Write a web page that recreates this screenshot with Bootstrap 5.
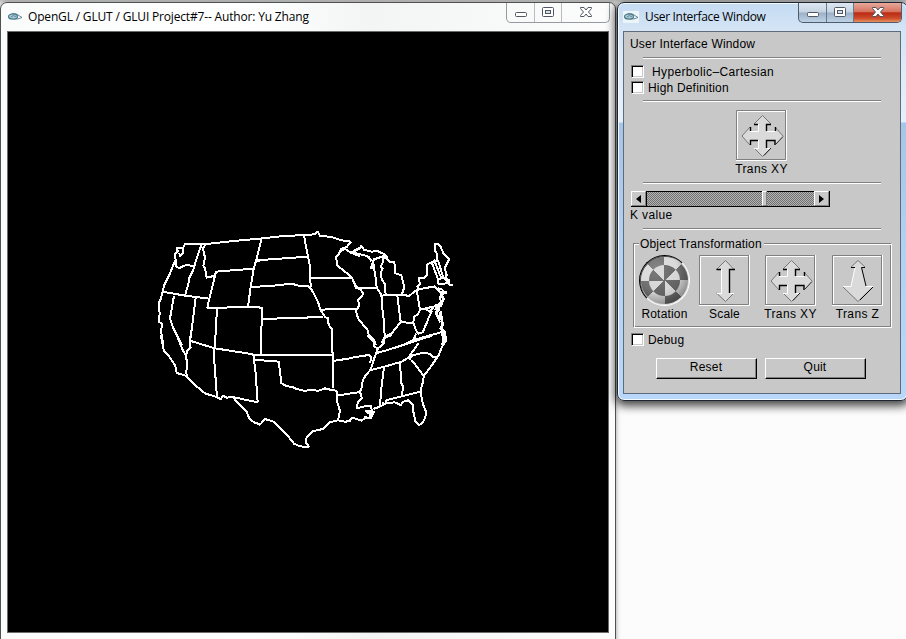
<!DOCTYPE html>
<html lang="en">
<head>
<meta charset="utf-8">
<title>User Interface Window</title>
<link rel="stylesheet" href="https://cdn.jsdelivr.net/npm/bootstrap@5.3.0/dist/css/bootstrap.min.css">
<style>
body{width:906px;height:639px;overflow:hidden;background:#fcfcfc;font-family:"Liberation Sans",Arial,sans-serif;font-size:12px;line-height:16px;color:#000}
.desk{width:906px;height:639px;background:linear-gradient(#bdbdbd 0,#e8e8e8 3px,#fcfcfc 8px)}
.win{top:2px}
.win-gl{left:0;width:616px;height:650px;border:1px solid #505050;border-radius:7px 7px 0 0;background:linear-gradient(90deg,#fafbfb,#fff 40%,#f3f5f5 60%,#fcfcfc);box-shadow:0 0 5px #0006;padding:0 6px}
.win-ui{left:617px;width:291px;height:399px;border:1px solid #1e2731;border-radius:7px;background:linear-gradient(#c4dbf2 0,#d5e5f6 28px,#e4eefa 95px,#e6f0fb 119px,#a5c6e9 120px,#b1d0f2 240px,#b9d7fa);box-shadow:0 3px 10px 2px #000b,inset 0 0 0 1px #f2f9ff;padding:0 5px}
.bar{height:28px}
.cap{font:12px/28px "Open Sans","Noto Sans",sans-serif;color:#000;white-space:nowrap}
.win-gl .cap{letter-spacing:-.17px;padding-left:5px}
.win-ui .cap{letter-spacing:-.33px;padding-left:2px}
.ctl{height:20px;border:1px solid #969b9f;border-top:0;border-radius:0 0 5px 5px;overflow:hidden}
.win-gl .ctl{margin-right:-1px}
.ctl>span{display:flex;align-items:center;justify-content:center;border-right:1px solid #b9bdc0;padding-bottom:1px}
.ctl>span:last-child{border:0}
.ctl .a{width:28px}.ctl .b{width:27px}.ctl .c{width:47px}
.win-ui .ctl{border-color:#4e5c6c;background:linear-gradient(#dde7f1,#c5d3e2 48%,#9cb0c7 52%,#bed2e6)}
.win-ui .ctl>span{border-color:#65778b}
.win-ui .ctl .c{background:linear-gradient(#e9a99b,#d67461 45%,#bc2a13 52%,#cb4c2b 80%,#e8935f)}
.canvas{display:block;background:#000;width:602px;height:602px;border:1px solid #6b6b6b}
.client{width:278px;height:363px;background:#c8c8c8;border:1px solid #5e6b7a;padding:4px 8px 0 6px}
.lbl{height:16px;white-space:nowrap;letter-spacing:.18px}
.wide{letter-spacing:.37px}
.sep{height:2px;width:238px;margin-left:13px;border-top:1px solid #808080;border-bottom:1px solid #fff}
.chk{width:13px;height:13px;border:1px solid #808080;border-right-color:#fff;border-bottom-color:#fff;background:#fff;box-shadow:inset 1px 1px #000,inset -1px -1px #c8c8c8;margin-left:1px;margin-top:1px}
.cell{width:51px}
.cell svg{display:block;flex:none}
.slider{width:199px;height:16px;margin-left:1px;border-bottom:1px solid #000;border-right:1px solid #000}
.track{height:15px;border-top:1px solid #000;background:repeating-conic-gradient(#707070 0 25%,#b4b4b4 0 50%) 0 0/2px 2px}
.track:nth-child(2){border-left:1px solid #000}
.knob{height:15px;background:#c8c8c8;border:1px solid #fff;border-right-color:#808080;border-bottom-color:#808080;display:flex;align-items:center;justify-content:center}
.group{width:259px;height:85px;margin-left:3px;border:1px solid;border-color:#808080 #fff #fff #808080;box-shadow:inset 1px 1px #fff,inset -1px -1px #808080;padding:0 0 0 5px}
.group .lgd{margin-top:-8px;background:#c8c8c8;width:125px;padding-left:1px}
.push{width:101px;height:21px;line-height:17px;text-align:center;background:#c8c8c8;border:1px solid #fff;border-right-color:#000;border-bottom-color:#000;box-shadow:inset -1px -1px #808080;padding:0 1px 2px 0;letter-spacing:.2px}
.ball{width:51px;height:51px;border-radius:50%;border:1px solid;border-color:#000 #fff #fff #000;padding:1px;box-shadow:inset 1px 1px #0009,inset -1px -1px #ddd}
.ball>div{width:47px;height:47px;border-radius:50%;padding:8px;background:radial-gradient(circle at 35% 30%,#fff3 0,#0000 45%,#0009 100%),repeating-conic-gradient(#d9d9d9 0 45deg,#6e6e6e 0 90deg)}
.ball>div>div{width:31px;height:31px;border-radius:50%;background:radial-gradient(circle at 25% 20%,#fff2,#0000 60%,#0002),repeating-conic-gradient(#666 0 45deg,#d6d6d6 0 90deg)}
</style>
<script src="https://cdn.jsdelivr.net/npm/bootstrap@5.3.0/dist/js/bootstrap.bundle.min.js"></script>
</head>
<body>
<svg width="0" height="0" class="position-absolute">
<defs>
<g id="fish"><ellipse cx="6" cy="5.500" rx="4.500" ry="2.600" fill="#a9c8d3" stroke="#477b8d" stroke-width="1.200"/><path d="M4 6Q6 3.500 9 5.500M5 2.500C9 2 11 4 15 6.500Q11 8.500 7 8" fill="none" stroke="#5a7f8c" stroke-width=".9"/></g>
<g id="mini"><rect x=".5" y=".5" width="11" height="4" rx="1" fill="#fff" stroke="#515663"/></g>
<g id="maxi"><rect x=".5" y=".5" width="11" height="9" rx="1" fill="#fff" stroke="#515663"/><rect x="3.500" y="3.500" width="5" height="3" fill="#d5dfe9" stroke="#515663"/></g>
<path id="close" d="M.5 .5H4L6 3 8 .5H11.500V1.500L8.500 5 11.500 8.500V9.500H8L6 7 4 9.500H.5V8.500L3.500 5 .5 1.500Z" fill="#fff" stroke="#515663"/>
<g id="frame"><path d="M.5 50V.5H50" fill="none" stroke="#808080"/><path d="M1.500 49V1.500H49" fill="none" stroke="#fff"/><path d="M50.500 0V50.500H0" fill="none" stroke="#fff"/><path d="M49.500 1V49.500H1" fill="none" stroke="#808080"/></g>
<g id="xy" fill="none">
<path d="M26.500 5.500L35 14H30.500V22H39V17L47 26 39 35V30H30.500V38H35L26.500 46.500 18 38H22.500V30H14V35L6 26 14 17V22H22.500V14H18Z" fill="#dadada"/>
<path d="M26.500 5.500L18 14M14 17L6 26M26.500 5.500L35 14M6 26L14 35M18 38L26.500 46.500 35 38M39 17L47 26" stroke="#777"/>
<path d="M22.500 14V21.500H14M22.500 30V38.500H18M39 21.500H31M31 38.500H35" stroke="#fff"/>
<path d="M30.500 21V14.500H35M30.500 38V30.500H39V35M14.500 35V30.500H22M14.500 17V21M18 14.500H22M39.500 17V21" stroke="#000" stroke-width="1.400"/>
<path d="M47 26.500L39.500 34.500M35 38L28 45.500" stroke="#222"/>
</g></defs>
</svg>
<main class="desk position-relative overflow-hidden">
<section class="win win-gl position-absolute">
  <header class="bar d-flex align-items-start">
    <svg class="mt-2" width="16" height="12"><use href="#fish"/></svg>
    <span class="cap flex-grow-1">OpenGL / GLUT / GLUI Project#7-- Author: Yu Zhang</span>
    <div class="ctl d-flex"><span class="a"><svg width="12" height="5" class="mt-1"><use href="#mini"/></svg></span><span class="b"><svg width="12" height="10"><use href="#maxi"/></svg></span><span class="c"><svg width="12" height="10"><use href="#close"/></svg></span></div>
  </header>
  <svg class="canvas" viewBox="8 32 600 600" fill="none" stroke="#fff" stroke-width="6" stroke-linejoin="round" shape-rendering="crispEdges">
    <g transform="translate(150 225) scale(.33333)">
      <path d="M330 41L250 48 180 56H106L98 70H88L80 68 83 78 75 86 79 125 88 129 106 121 134 122M96 66L100 82 90 94 88 84M76 105L58 150 42 182 38 200 32 222 26 236 29 265 27 290 35 296 34 325 40 360M155 58L140 100 130 135 118 158V166L105 212M166 59L159 70 165 98 160 122 165 130 170 158 195 152M195 152L198 140 310 131M38 200L105 212 178 221M195 152L178 221 172 248 294 247 330 246M72 212L60 280 70 310 96 360M137 218L119 360M201 249L195 360M318 108L311 131 302 185 294 247M318 108H330M302 185H330"/>
    </g>
    <g transform="translate(150 335) scale(.33333)">
      <path d="M32 0L42 48 55 60 76 92 80 114 102 120 112 126M80 0L98 45 108 62 112 48 122 38 119 18 122 0M108 62L112 92 108 112 112 126 140 154 165 175 202 187 212 192 220 182 230 188 248 186 323 202M122 18L195 40 310 58M194 0L193 80 201 187M310 58L316 105 323 202M250 188L262 203 290 230 298 250 312 262 330 269"/>
    </g>
    <g transform="translate(250 225) scale(.33333)">
      <path d="M30 41L80 35 160 30 194 28 203 20 210 32 245 36 275 46 304 50M35 40L18 108M162 32L174 95 180 125 182 186M20 106L90 101 174 95M2 186L60 183 125 176 145 182 175 182 186 196 204 230 210 252 225 276 234 280 236 300 245 312V360M182 158H310M304 50L290 66 274 72 266 88 258 96 262 122 290 144 306 158 318 185 330 192M266 80L286 72 300 82 330 94M210 254L315 251M28 249H36L33 360M36 282L220 276"/>
      <path d="M304 82L330 68"/>
    </g>
    <g transform="translate(250 335) scale(.33333)">
      <path d="M8 59L246 60M33 0V58M246 0L249 100V160M10 74L86 80 90 110 94 144 110 154 125 155 140 162 164 168 185 164 204 168 225 160 240 164 249 164 262 170V202L270 228 264 256 240 262 232 270 218 282 202 286 190 288 175 302 170 306 168 324 178 336M178 336L150 334 132 326 116 306 90 280 70 260 45 252 30 269 10 260M249 78L300 70M262 181L300 176M264 256L285 260 303 258"/>
    </g>
    <g transform="translate(350 225) scale(.33333)">
      <path d="M4 82L30 70 34 62 42 74 64 80 82 78 104 88 112 98 90 97 72 103 68 114 62 130 72 125 68 108M4 82L40 90 56 96 64 108M100 90V110L92 124 98 130 92 145 96 165 104 176 107 208M108 98L118 110 132 112 136 124V145L146 148 154 150 162 182 160 198 154 210M94 213L107 209H155L178 213 190 202 204 194 202 184 210 176 206 160 220 160 232 150 230 138 232 118 245 112 262 106 262 88 256 78V56H264L272 66 280 84 298 102 290 118 284 128 290 150 286 162 296 164V176L306 182M68 110L76 150 80 188 94 210 97 250 102 290 104 335M142 212L152 290M202 190L212 192 254 184 264 194 274 206 270 220 274 234M200 196L210 254 268 241M18 188H80M6 158L18 188 32 194 40 206 34 216 24 224 28 240 18 258 24 280 40 300 52 312 56 328 70 342 78 360M0 252H18M104 335L94 355M104 335L126 324 140 306 152 290 182 295 190 292 192 275 204 268 210 254M190 294L198 316 206 326 218 322 230 294 236 278 246 258M198 326L190 345 168 356M190 345L280 320M245 112L264 162 266 180M252 104L274 160M264 106L280 158M266 162L288 158M268 178L296 174M264 190L278 194"/>
      <path d="M276 198L286 202 274 208 280 222 272 242 268 236 266 256 258 262 264 276 270 278 272 262 278 300 272 310 284 322 288 350M254 250L264 256 260 240 274 240" stroke-width="8"/>
      <path d="M288 164L302 182M226 252L240 260 250 248M262 272L270 292M106 90V102"/>
      <path d="M274 202H292M296 180H308M276 318L282 352" stroke-width="8"/>
    </g>
    <g transform="translate(350 335) scale(.33333)">
      <path d="M0 69L56 60 64 68 60 84M52 0L70 20 74 36 84 40 100 28 104 8 126 0M84 40L78 55 70 78 62 104 48 120 38 136 36 155 30 170 36 190 24 200 20 220 44 214 62 212 66 228 48 228 60 238 72 232 62 250 42 246M0 256L8 248 34 257 52 246M0 174L30 172M80 54L110 46 246 2M62 105L100 96 155 80 175 68 184 74M196 0L190 18M206 24L192 44 175 68M180 70L190 60 218 54 238 56 250 66 260 66M184 74L204 100 222 124M282 2L286 18 276 36 266 60 246 90 222 122 218 144 212 166 215 190 220 210 228 230 226 248 218 262 208 270 196 258 190 230 188 208 174 196 160 200 152 210 134 202 108 205 92 214 70 222M102 97L94 160 90 212M150 83L154 145 160 155 155 184M108 196L156 184 212 170M106 196L112 206M98 202L100 214"/>
      <path d="M280 0L284 12 276 30M56 230L66 234M60 224V252" stroke-width="8"/>
    </g>
  </svg>
</section>

<section class="win win-ui position-absolute">
  <header class="bar d-flex align-items-start">
    <svg class="mt-2" width="16" height="12"><rect width="16" height="12" fill="#eef5f9"/><use href="#fish"/></svg>
    <span class="cap ms-1 flex-grow-1">User Interface Window</span>
    <div class="ctl d-flex"><span class="a"><svg width="12" height="5" class="mt-1"><use href="#mini"/></svg></span><span class="b"><svg width="12" height="10"><use href="#maxi"/></svg></span><span class="c"><svg width="12" height="10"><use href="#close"/></svg></span></div>
  </header>
  <div class="client">
    <div class="lbl">User Interface Window</div>
    <div class="sep" style="margin-top:5px"></div>
    <div class="d-flex" style="margin-top:5px"><span class="chk"></span><span class="lbl wide ms-2">Hyperbolic&#8211;Cartesian</span></div>
    <div class="d-flex"><span class="chk"></span><span class="lbl ms-1">High Definition</span></div>
    <div class="sep" style="margin-top:4px"></div>
    <div class="cell d-flex flex-column align-items-center" style="margin:8px 0 0 106px"><svg width="51" height="51"><use href="#frame"/><use href="#xy"/></svg><span class="lbl wide">Trans XY</span></div>
    <div class="sep" style="margin-top:5px"></div>
    <div class="slider d-flex" style="margin-top:7px">
      <span class="knob" style="width:15px"><svg width="5" height="8"><path d="M5 0V8L0 4Z"/></svg></span>
      <span class="track flex-grow-1"></span><span class="knob" style="width:5px"></span>
      <span class="track" style="width:47px"></span>
      <span class="knob" style="width:15px"><svg width="5" height="8"><path d="M0 0V8L5 4Z"/></svg></span>
    </div>
    <div class="lbl wide">K value</div>
    <div class="sep" style="margin-top:5px"></div>
    <div class="group" style="margin-top:13px">
      <div class="lbl lgd">Object Transformation</div>
      <div class="d-flex" style="margin-top:3px">
        <div class="cell d-flex flex-column align-items-center"><div class="ball"><div><div></div></div></div><span class="lbl">Rotation</span></div>
        <div class="cell d-flex flex-column align-items-center" style="margin-left:9px"><svg width="51" height="51" fill="none"><use href="#frame"/><path d="M26.500 5.500L35 14H30.500V38H35L26.500 46.500 18 38H22.500V14H18Z" fill="#dadada"/><path d="M17.500 14.500L26.500 5.500 35 14.500M17.500 38L26.500 46.500 35 38" stroke="#777"/><path d="M18 38.500H22.500V14M31 38.500H35" stroke="#fff"/><path d="M17.500 14.500H22M36 14.500H30.500V38" stroke="#000" stroke-width="1.400"/></svg><span class="lbl">Scale</span></div>
        <div class="cell d-flex flex-column align-items-center" style="margin-left:15px"><svg width="51" height="51"><use href="#frame"/><use href="#xy"/></svg><span class="lbl wide">Trans XY</span></div>
        <div class="cell d-flex flex-column align-items-center" style="margin-left:16px"><svg width="51" height="51" fill="none"><use href="#frame"/><path d="M26 5.500L33 12H29.500L34 32H41L26 46.500 11 32H19L23 12H19Z" fill="#dadada"/><path d="M19 12L26 5.500 33 12M11 32L26 46.500 41 32" stroke="#777"/><path d="M11 31.500H19L23 13M34 31.500H41" stroke="#fff"/><path d="M19 12.500H23M33 12.500H29.500L34 31M41 32L28 45" stroke="#000"/></svg><span class="lbl wide">Trans Z</span></div>
      </div>
    </div>
    <div class="d-flex" style="margin-top:4px"><span class="chk"></span><span class="lbl ms-1">Debug</span></div>
    <div class="d-flex" style="margin:10px 0 0 26px;gap:8px"><button class="push">Reset</button><button class="push">Quit</button></div>
  </div>
</section>
</main>
</body>
</html>
